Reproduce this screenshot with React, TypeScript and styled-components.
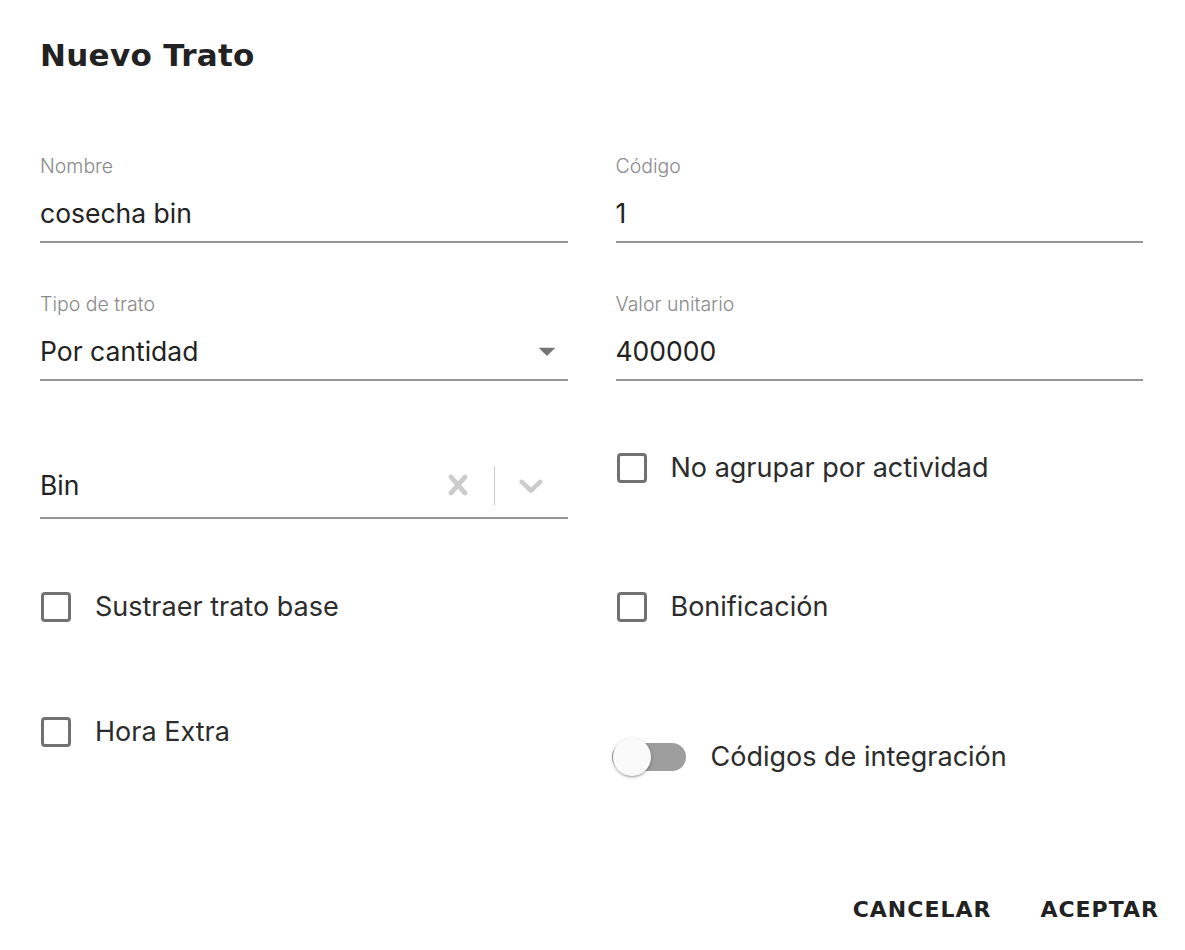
import React from "react";
import styled, { createGlobalStyle } from "styled-components";

const GlobalStyle = createGlobalStyle`
  html, body { margin: 0; padding: 0; background: #ffffff; }
  body { font-family: "Inter", "Roboto", sans-serif; color: #222; }
  * { box-sizing: border-box; }
`;

const Page = styled.div`
  width: 1185px;
  min-height: 950px;
  background: #fff;
`;

const Content = styled.div`
  padding: 35px 42px 0 40px;
`;

const Title = styled.h1`
  margin: 0;
  font-family: "DejaVu Sans", sans-serif;
  font-weight: 700;
  font-size: 31px;
  line-height: 40px;
  color: #222;
  letter-spacing: 0.3px;
`;

const Grid = styled.div`
  margin-top: 81px;
  display: grid;
  grid-template-columns: 1fr 1fr;
  column-gap: 48px;
  grid-auto-rows: 138px;
`;

const Field = styled.div`
  display: flex;
  flex-direction: column;
`;

const Label = styled.label`
  font-family: "Inter", sans-serif;
  font-weight: 300;
  font-size: 19.5px;
  line-height: 20px;
  color: #8a8a8a;
  height: 20px;
`;

const InputRow = styled.div<{ $top?: number }>`
  margin-top: ${(p) => p.$top ?? 20}px;
  display: flex;
  align-items: center;
  height: ${(p) => (p.$top !== undefined ? 51 : 47)}px;
  padding-bottom: ${(p) => (p.$top !== undefined ? 15 : 11)}px;
  border-bottom: 2px solid #969696;
`;

const Value = styled.span`
  flex: 1;
  font-family: "Inter", sans-serif;
  font-size: 26.5px;
  line-height: 34px;
  color: #222;
`;

const Indicators = styled.div`
  display: flex;
  align-items: center;
  gap: 16px;
  padding-right: 17px;
  height: 34px;
`;

const Divider = styled.span`
  width: 1px;
  height: 39px;
  background: #cccccc;
`;

const IconBox = styled.span<{ $right?: number }>`
  display: flex;
  align-items: center;
  justify-content: center;
  width: 40px;
  height: 34px;
  overflow: visible;
  margin-right: ${(p) => p.$right ?? 0}px;
`;

const Cell = styled.div<{ $top: number }>`
  padding-top: ${(p) => p.$top}px;
`;

const CheckItem = styled.label`
  display: flex;
  align-items: center;
  gap: 24px;
  margin-left: 1px;
`;

const Box = styled.span`
  width: 30px;
  height: 30px;
  border: 3px solid #717171;
  border-radius: 4px;
  flex: none;
`;

const ItemText = styled.span`
  font-family: "Inter", sans-serif;
  font-size: 27px;
  line-height: 30px;
  color: #2c2c2c;
`;

const SwitchItem = styled.label`
  display: flex;
  align-items: center;
  gap: 25px;
  margin-left: -4px;
`;

const Track = styled.span`
  position: relative;
  display: flex;
  align-items: center;
  width: 74px;
  height: 38px;
`;

const TrackBar = styled.span`
  width: 74px;
  height: 28px;
  border-radius: 14px;
  background: #9e9e9e;
`;

const Thumb = styled.span`
  position: absolute;
  left: 1px;
  top: 0;
  width: 38px;
  height: 38px;
  border-radius: 50%;
  background: #fafafa;
  box-shadow: 0 2px 2px -1px rgba(0, 0, 0, 0.2), 0 1px 3px 0 rgba(0, 0, 0, 0.14),
    0 1px 5px 0 rgba(0, 0, 0, 0.12);
`;

const Actions = styled.div`
  margin-top: 41px;
  display: flex;
  justify-content: flex-end;
  gap: 25px;
  padding-right: 14px;
`;

const Button = styled.button`
  border: none;
  background: transparent;
  padding: 0 12px;
  height: 44px;
  font-family: "DejaVu Sans", sans-serif;
  font-weight: 700;
  font-size: 22px;
  letter-spacing: 1px;
  color: #222;
  cursor: pointer;
`;

const ArrowDrop = () => (
  <svg width="40" height="40" viewBox="0 0 24 24">
    <path d="M7 10l5 5 5-5z" fill="#757575" />
  </svg>
);

const CrossIcon = () => (
  <svg width="40" height="40" viewBox="0 0 20 20">
    <path
      fill="#cccccc"
      d="M14.348 14.849c-0.469 0.469-1.229 0.469-1.697 0l-2.651-3.030-2.651 3.029c-0.469 0.469-1.229 0.469-1.697 0-0.469-0.469-0.469-1.229 0-1.697l2.758-3.15-2.759-3.152c-0.469-0.469-0.469-1.228 0-1.697s1.228-0.469 1.697 0l2.652 3.031 2.651-3.031c0.469-0.469 1.228-0.469 1.697 0s0.469 1.229 0 1.697l-2.758 3.152 2.758 3.15c0.469 0.469 0.469 1.229 0 1.698z"
    />
  </svg>
);

const ChevronIcon = () => (
  <svg width="40" height="40" viewBox="0 0 20 20">
    <path
      fill="#cccccc"
      d="M4.516 7.548c0.436-0.446 1.043-0.481 1.576 0l3.908 3.747 3.908-3.747c0.533-0.481 1.141-0.446 1.574 0 0.436 0.445 0.408 1.197 0 1.615-0.406 0.418-4.695 4.502-4.695 4.502-0.217 0.223-0.502 0.335-0.787 0.335s-0.57-0.112-0.789-0.335c0 0-4.287-4.084-4.695-4.502s-0.436-1.17 0-1.615z"
    />
  </svg>
);

const TextField = ({ label, value, select }: { label: string; value: string; select?: boolean }) => (
  <Field>
    <Label>{label}</Label>
    <InputRow>
      <Value>{value}</Value>
      {select && (
        <IconBox $right={1}>
          <ArrowDrop />
        </IconBox>
      )}
    </InputRow>
  </Field>
);

const Check = ({ text }: { text: string }) => (
  <CheckItem>
    <Box />
    <ItemText>{text}</ItemText>
  </CheckItem>
);

export default function App() {
  return (
    <Page>
      <GlobalStyle />
      <Content>
        <Title>Nuevo Trato</Title>
        <Grid>
          <TextField label="Nombre" value="cosecha bin" />
          <TextField label="Código" value="1" />
          <TextField label="Tipo de trato" value="Por cantidad" select />
          <TextField label="Valor unitario" value="400000" />
          <Field>
            <InputRow $top={36}>
              <Value>Bin</Value>
              <Indicators>
                <IconBox>
                  <CrossIcon />
                </IconBox>
                <Divider />
                <IconBox>
                  <ChevronIcon />
                </IconBox>
              </Indicators>
            </InputRow>
          </Field>
          <Cell $top={21}>
            <Check text="No agrupar por actividad" />
          </Cell>
          <Cell $top={22}>
            <Check text="Sustraer trato base" />
          </Cell>
          <Cell $top={22}>
            <Check text="Bonificación" />
          </Cell>
          <Cell $top={9}>
            <Check text="Hora Extra" />
          </Cell>
          <Cell $top={30}>
            <SwitchItem>
              <Track>
                <TrackBar />
                <Thumb />
              </Track>
              <ItemText>Códigos de integración</ItemText>
            </SwitchItem>
          </Cell>
        </Grid>
      </Content>
      <Actions>
        <Button>CANCELAR</Button>
        <Button>ACEPTAR</Button>
      </Actions>
    </Page>
  );
}
